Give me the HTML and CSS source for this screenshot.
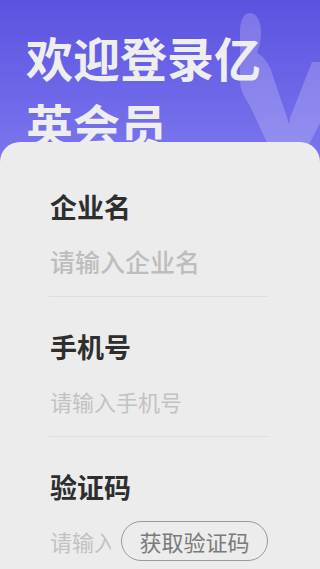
FILE: index.html
```html
<!DOCTYPE html>
<html lang="zh">
<head>
<meta charset="utf-8">
<meta name="viewport" content="width=device-width, initial-scale=1">
<link rel="stylesheet" href="styles.css">
</head>
<body>
<header class="hero">
  <svg class="hero-mark" viewBox="0 0 320 162" width="320" height="162" aria-hidden="true">
    <g fill="#ffffff" opacity="0.2">
      <path d="M250 13 C256 13 261 20 261 32 C261 42 259 48 257 53 C263 56 267 61 271 70 L302 162 L276 162 L250 106 C244 96 240 90 240 80 L240 32 C240 20 244 13 250 13 Z M312 62 L332 62 L332 100 L300 162 L288 140 L290 118 Z"/>
    </g>
  </svg>
  <h1 class="hero-title">欢迎登录亿<br>英会员</h1>
</header>
<main class="card">
  <div class="field">
    <label class="field-label" for="company">企业名</label>
    <div class="field-row">
      <input class="field-input field-input--lg" id="company" type="text" placeholder="请输入企业名">
    </div>
  </div>
  <div class="field">
    <label class="field-label" for="phone">手机号</label>
    <div class="field-row">
      <input class="field-input" id="phone" type="tel" placeholder="请输入手机号">
    </div>
  </div>
  <div class="field">
    <label class="field-label" for="code">验证码</label>
    <div class="field-row">
      <input class="field-input" id="code" type="text" placeholder="请输入验证码">
      <button class="code-btn" type="button">获取验证码</button>
    </div>
  </div>
</main>
</body>
</html>
```
FILE: styles.css
```css
* { box-sizing: border-box; }
html, body {
  margin: 0;
  padding: 0;
}
body {
  background: #ececec;
  font-family: "Noto Sans CJK SC", "Noto Sans", sans-serif;
  overflow: hidden;
}
.hero {
  position: relative;
  height: 162px;
  overflow: hidden;
  background: linear-gradient(180deg, #5c52e0 0%, #6d66e8 55%, #7b76ee 100%);
  padding: 23px 0 0 26px;
}
.hero-mark {
  position: absolute;
  left: 0;
  top: 0;
}
.hero-title {
  position: relative;
  margin: 0;
  font-size: 47px;
  line-height: 67px;
  font-weight: 700;
  color: #eeeeee;
  letter-spacing: 0;
}
.card {
  position: relative;
  margin-top: -20px;
  background: #ececec;
  border-radius: 20px 20px 0 0;
  padding: 15px 52px 0 49px;
  min-height: 430px;
}
.field {
  padding: 35px 0 13px;
  border-bottom: 1px solid #dedede;
}
.field-label {
  display: block;
  font-size: 27px;
  line-height: 30px;
  font-weight: 700;
  color: #2e2e2e;
  padding-left: 1px;
  margin-bottom: 17px;
}
.field-row {
  display: flex;
  align-items: center;
  gap: 10px;
  height: 44px;
}
.field-input {
  flex: 1;
  min-width: 0;
  border: 0;
  outline: none;
  background: transparent;
  padding: 0 0 0 1px;
  margin: 0;
  font-family: "Noto Sans CJK SC", "Noto Sans", sans-serif;
  font-size: 22px;
  line-height: 30px;
  color: #333;
}
.field-input::placeholder {
  color: #c2c2c2;
}
.field-input--lg {
  font-size: 25px;
  font-weight: 500;
}
.field-input--lg::placeholder {
  color: #bdbdbd;
}
.code-btn {
  flex: 0 0 147px;
  height: 40px;
  border: 1.5px solid #9a9a9a;
  border-radius: 20px;
  background: transparent;
  font-family: "Noto Sans CJK SC", "Noto Sans", sans-serif;
  font-size: 22px;
  color: #7a7a7a;
  padding: 0;
  line-height: 36px;
}
```
